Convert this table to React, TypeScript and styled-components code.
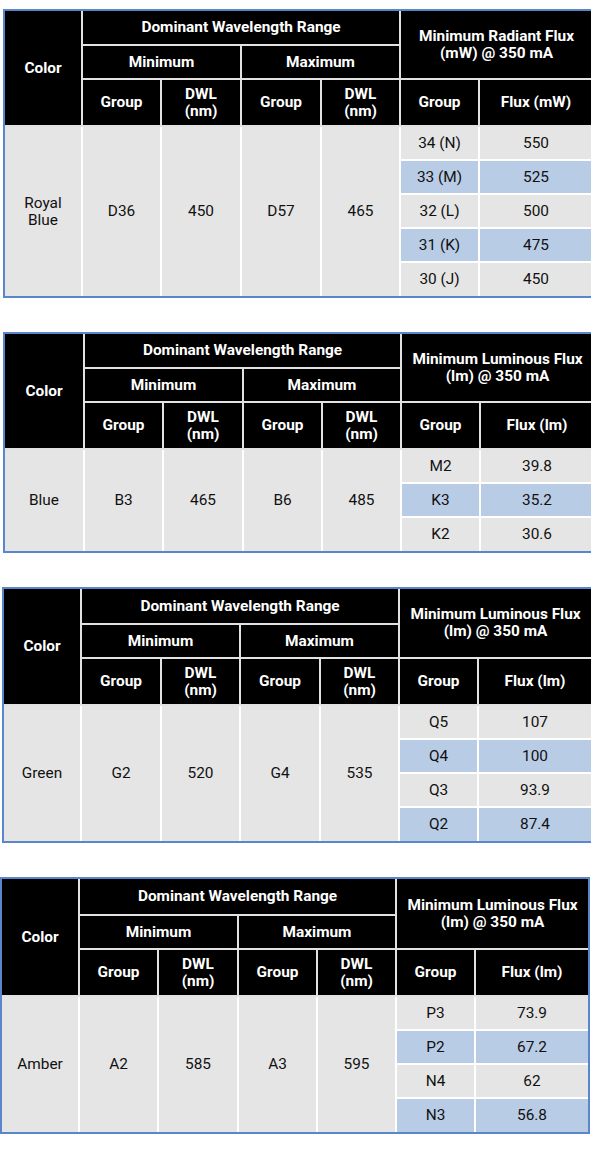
import React from "react";
import styled, { createGlobalStyle } from "styled-components";

const GlobalStyle = createGlobalStyle`
  html, body {
    margin: 0;
    padding: 0;
    background: #ffffff;
    overflow: hidden;
  }
  body {
    font-family: Roboto, "Liberation Sans", Arial, sans-serif;
  }
`;

const Page = styled.div`
  display: flex;
  flex-direction: column;
  gap: 34px;
  padding-top: 9px;
`;

const Frame = styled.div<{ $offset: number }>`
  width: max-content;
  margin-left: ${(p) => p.$offset}px;
  border: 2px solid #5b86cb;
`;

const Table = styled.table`
  border-collapse: collapse;
  border-style: hidden;
  table-layout: fixed;
  font-size: 15.4px;
  line-height: 17px;
`;

const Row = styled.tr<{ $h: number }>`
  height: ${(p) => p.$h}px;
`;

const HeadCell = styled.th`
  background: #000000;
  color: #ffffff;
  font-weight: 700;
  text-align: center;
  vertical-align: middle;
  padding: 0;
  border: 2px solid #e2e2e2;
`;

const Cell = styled.td<{ $hl?: boolean }>`
  background: ${(p) => (p.$hl ? "#b9cce6" : "#e5e5e5")};
  color: #111111;
  font-weight: 400;
  text-align: center;
  vertical-align: middle;
  padding: 0;
  border: 2px solid #ffffff;
`;

type Bin = { group: string; flux: string };

type LedTable = {
  color: string[];
  minGroup: string;
  minDwl: string;
  maxGroup: string;
  maxDwl: string;
  fluxTitle: string[];
  fluxUnit: string;
  bins: Bin[];
  cols: number[];
  offset: number;
  rowH: number;
  topH: number;
};

const tables: LedTable[] = [
  {
    color: ["Royal", "Blue"],
    minGroup: "D36",
    minDwl: "450",
    maxGroup: "D57",
    maxDwl: "465",
    fluxTitle: ["Minimum Radiant Flux", "(mW) @ 350 mA"],
    fluxUnit: "Flux (mW)",
    bins: [
      { group: "34 (N)", flux: "550" },
      { group: "33 (M)", flux: "525" },
      { group: "32 (L)", flux: "500" },
      { group: "31 (K)", flux: "475" },
      { group: "30 (J)", flux: "450" },
    ],
    cols: [77, 79, 80, 80, 79, 79, 113],
    offset: 3,
    rowH: 34,
    topH: 34,
  },
  {
    color: ["Blue"],
    minGroup: "B3",
    minDwl: "465",
    maxGroup: "B6",
    maxDwl: "485",
    fluxTitle: ["Minimum Luminous Flux", "(lm) @ 350 mA"],
    fluxUnit: "Flux (lm)",
    bins: [
      { group: "M2", flux: "39.8" },
      { group: "K3", flux: "35.2" },
      { group: "K2", flux: "30.6" },
    ],
    cols: [79, 79, 80, 79, 79, 79, 113],
    offset: 3,
    rowH: 34,
    topH: 34,
  },
  {
    color: ["Green"],
    minGroup: "G2",
    minDwl: "520",
    maxGroup: "G4",
    maxDwl: "535",
    fluxTitle: ["Minimum Luminous Flux", "(lm) @ 350 mA"],
    fluxUnit: "Flux (lm)",
    bins: [
      { group: "Q5", flux: "107" },
      { group: "Q4", flux: "100" },
      { group: "Q3", flux: "93.9" },
      { group: "Q2", flux: "87.4" },
    ],
    cols: [77, 80, 79, 80, 79, 79, 113],
    offset: 2,
    rowH: 34,
    topH: 35,
  },
  {
    color: ["Amber"],
    minGroup: "A2",
    minDwl: "585",
    maxGroup: "A3",
    maxDwl: "595",
    fluxTitle: ["Minimum Luminous Flux", "(lm) @ 350 mA"],
    fluxUnit: "Flux (lm)",
    bins: [
      { group: "P3", flux: "73.9" },
      { group: "P2", flux: "67.2" },
      { group: "N4", flux: "62" },
      { group: "N3", flux: "56.8" },
    ],
    cols: [77, 79, 80, 79, 79, 79, 113],
    offset: 0,
    rowH: 34,
    topH: 36,
  },
];

const Lines: React.FC<{ lines: string[] }> = ({ lines }) => (
  <>
    {lines.map((l, i) => (
      <React.Fragment key={i}>
        {i > 0 && <br />}
        {l}
      </React.Fragment>
    ))}
  </>
);

const BinTable: React.FC<{ t: LedTable }> = ({ t }) => {
  const n = t.bins.length;
  const total = t.cols.reduce((a, b) => a + b, 0);
  return (
    <Frame $offset={t.offset}>
      <Table style={{ width: total }}>
        <colgroup>
          {t.cols.map((w, i) => (
            <col key={i} style={{ width: w }} />
          ))}
        </colgroup>
        <thead>
          <Row $h={t.topH}>
            <HeadCell rowSpan={3}>Color</HeadCell>
            <HeadCell colSpan={4}>Dominant Wavelength Range</HeadCell>
            <HeadCell colSpan={2} rowSpan={2}>
              <Lines lines={t.fluxTitle} />
            </HeadCell>
          </Row>
          <Row $h={34}>
            <HeadCell colSpan={2}>Minimum</HeadCell>
            <HeadCell colSpan={2}>Maximum</HeadCell>
          </Row>
          <Row $h={47}>
            <HeadCell>Group</HeadCell>
            <HeadCell>
              DWL
              <br />
              (nm)
            </HeadCell>
            <HeadCell>Group</HeadCell>
            <HeadCell>
              DWL
              <br />
              (nm)
            </HeadCell>
            <HeadCell>Group</HeadCell>
            <HeadCell>{t.fluxUnit}</HeadCell>
          </Row>
        </thead>
        <tbody>
          {t.bins.map((b, i) => {
            const hl = i % 2 === 1;
            return (
              <Row key={i} $h={t.rowH}>
                {i === 0 && (
                  <>
                    <Cell rowSpan={n}>
                      <Lines lines={t.color} />
                    </Cell>
                    <Cell rowSpan={n}>{t.minGroup}</Cell>
                    <Cell rowSpan={n}>{t.minDwl}</Cell>
                    <Cell rowSpan={n}>{t.maxGroup}</Cell>
                    <Cell rowSpan={n}>{t.maxDwl}</Cell>
                  </>
                )}
                <Cell $hl={hl}>{b.group}</Cell>
                <Cell $hl={hl}>{b.flux}</Cell>
              </Row>
            );
          })}
        </tbody>
      </Table>
    </Frame>
  );
};

export default function App() {
  return (
    <>
      <GlobalStyle />
      <Page>
        {tables.map((t, i) => (
          <BinTable key={i} t={t} />
        ))}
      </Page>
    </>
  );
}
